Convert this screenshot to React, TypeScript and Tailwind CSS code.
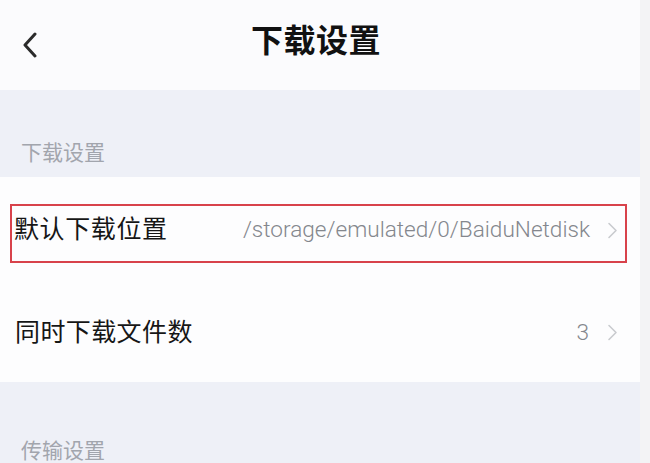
const Chevron = () => (
  <svg width="11" height="17" viewBox="0 0 11 17" fill="none" className="shrink-0">
    <path d="M2 1.5 L9 8.5 L2 15.5" stroke="#c9cbcf" strokeWidth="1.6" strokeLinecap="round" strokeLinejoin="round" />
  </svg>
)

const App = () => {
  const cjk = { fontFamily: "Roboto, 'Noto Sans CJK SC', sans-serif" }
  return (
    <div className="w-[650px] h-[463px] overflow-hidden flex bg-[#f3f3f5]" style={cjk}>
      <div className="w-[640px] flex flex-col">
        {/* header */}
        <div className="h-[90px] bg-[#fbfbfd] flex items-center relative shrink-0">
          <div className="pl-[22px] w-[60px]">
            <svg width="16" height="26" viewBox="0 0 16 26" fill="none">
              <path d="M13 2 L3 13 L13 24" stroke="#2b2b2b" strokeWidth="3" strokeLinecap="round" strokeLinejoin="round" />
            </svg>
          </div>
          <h1 className="absolute left-[251px] top-[21px] text-[32px] leading-[40px] font-bold text-[#111] tracking-[0.5px]">下载设置</h1>
        </div>

        {/* section: 下载设置 */}
        <div className="h-[87px] bg-[#eef0f7] flex items-end pb-[10px] pl-[21px] shrink-0">
          <span className="text-[21px] leading-[28px] text-[#a2a5ad]">下载设置</span>
        </div>

        <div className="bg-[#fdfdfe] flex flex-col shrink-0">
          <div className="h-[106px] flex items-center pl-[14px] pr-[22px] relative">
            <span className="text-[25px] leading-[32px] text-[#161616] tracking-[0.6px]">默认下载位置</span>
            <span className="ml-auto text-[22.6px] leading-[28px] font-light text-[#84878d] mr-[17px]">/storage/emulated/0/BaiduNetdisk</span>
            <Chevron />
            <div className="absolute left-[10px] right-[13px] top-[27px] h-[59px] border-2 border-[#d8424b] pointer-events-none"></div>
          </div>
          <div className="h-[99px] flex items-center pl-[15px] pr-[22px]">
            <span className="text-[25px] leading-[32px] text-[#161616] tracking-[0.4px]">同时下载文件数</span>
            <span className="ml-auto text-[22.6px] leading-[28px] font-light text-[#84878d] mr-[18px]">3</span>
            <Chevron />
          </div>
        </div>

        {/* section: 传输设置 */}
        <div className="flex-1 bg-[#eef0f7] pt-[55px] pl-[21px]">
          <span className="text-[21px] leading-[28px] text-[#a2a5ad]">传输设置</span>
        </div>
      </div>
      <div className="w-[10px] bg-[#f3f3f5]"></div>
    </div>
  )
}

export default App
